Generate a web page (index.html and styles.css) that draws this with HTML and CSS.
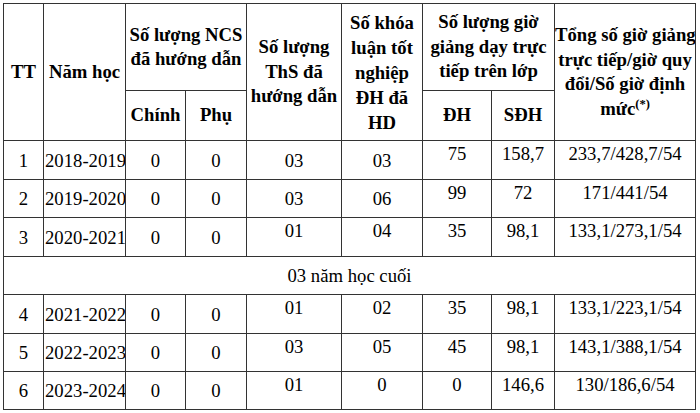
FILE: index.html
```html
<!DOCTYPE html>
<html lang="vi">
<head>
<meta charset="utf-8">
<title>Bảng giờ giảng</title>
<link rel="stylesheet" href="styles.css">
</head>
<body>
<table class="tbl">
  <colgroup>
    <col class="c-tt"><col class="c-year"><col class="c-chinh"><col class="c-phu"><col class="c-ths"><col class="c-kl"><col class="c-dh"><col class="c-sdh"><col class="c-tong">
  </colgroup>
  <thead>
    <tr class="h1">
      <th rowspan="2">TT</th>
      <th rowspan="2">Năm học</th>
      <th colspan="2">Số lượng NCS<br>đã hướng dẫn</th>
      <th rowspan="2">Số lượng<br>ThS đã<br>hướng dẫn</th>
      <th rowspan="2" class="kl">Số khóa<br>luận tốt<br>nghiệp<br>ĐH đã<br>HD</th>
      <th colspan="2">Số lượng giờ<br>giảng dạy trực<br>tiếp trên lớp</th>
      <th rowspan="2" class="tong">Tổng số giờ giảng<br>trực tiếp/giờ quy<br>đổi/Số giờ định<br>mức<sup>(*)</sup></th>
    </tr>
    <tr class="h2">
      <th>Chính</th>
      <th>Phụ</th>
      <th>ĐH</th>
      <th>SĐH</th>
    </tr>
  </thead>
  <tbody>
    <tr class="r39">
      <td>1</td><td class="year">2018-2019</td><td>0</td><td>0</td><td>03</td><td>03</td><td class="t">75</td><td class="t">158,7</td><td class="t">233,7/428,7/54</td>
    </tr>
    <tr class="r38">
      <td>2</td><td class="year">2019-2020</td><td>0</td><td>0</td><td>03</td><td>06</td><td class="t">99</td><td class="t">72</td><td class="t">171/441/54</td>
    </tr>
    <tr class="r39">
      <td>3</td><td class="year">2020-2021</td><td>0</td><td>0</td><td class="t">01</td><td class="t">04</td><td class="t">35</td><td class="t">98,1</td><td class="t">133,1/273,1/54</td>
    </tr>
    <tr class="r38">
      <td colspan="9" class="sep">03 năm học cuối</td>
    </tr>
    <tr class="r39">
      <td>4</td><td class="year">2021-2022</td><td>0</td><td>0</td><td class="t">01</td><td class="t">02</td><td class="t">35</td><td class="t">98,1</td><td class="t">133,1/223,1/54</td>
    </tr>
    <tr class="r38">
      <td>5</td><td class="year">2022-2023</td><td>0</td><td>0</td><td class="t">03</td><td class="t">05</td><td class="t">45</td><td class="t">98,1</td><td class="t">143,1/388,1/54</td>
    </tr>
    <tr class="r38">
      <td>6</td><td class="year">2023-2024</td><td>0</td><td>0</td><td class="t">01</td><td class="t">0</td><td class="t">0</td><td class="t">146,6</td><td class="t">130/186,6/54</td>
    </tr>
  </tbody>
</table>
</body>
</html>
```
FILE: styles.css
```css
html, body {
  background: #fff;
}
body {
  margin: 3px;
  font-family: "Liberation Serif", "Times New Roman", serif;
  font-size: 18.7px;
  color: #000;
}
.tbl {
  border-collapse: collapse;
  table-layout: fixed;
  width: 692px;
}
.c-tt { width: 40px; }
.c-year { width: 82px; }
.c-chinh { width: 60px; }
.c-phu { width: 61px; }
.c-ths { width: 95px; }
.c-kl { width: 81px; }
.c-dh { width: 69px; }
.c-sdh { width: 63px; }
.c-tong { width: 141px; }

.tbl th, .tbl td {
  border: 1px solid #333;
  padding: 0;
  text-align: center;
  vertical-align: middle;
  overflow: hidden;
  white-space: nowrap;
}
.tbl th {
  font-weight: bold;
  line-height: 24.5px;
}
.tbl td {
  line-height: 21px;
}
.h1 { height: 87px; }
.h2 { height: 50px; }
.r39 { height: 39px; }
.r38 { height: 38px; }

.tbl th.kl { line-height: 25px; }
.tbl sup {
  font-size: 12.5px;
  line-height: 0;
  vertical-align: 7px;
}
.tbl td.year {
  text-align: left;
  padding-left: 1px;
}
.tbl td.t {
  vertical-align: top;
  padding-top: 2px;
}
.tbl td.sep {
  font-weight: normal;
}
```
